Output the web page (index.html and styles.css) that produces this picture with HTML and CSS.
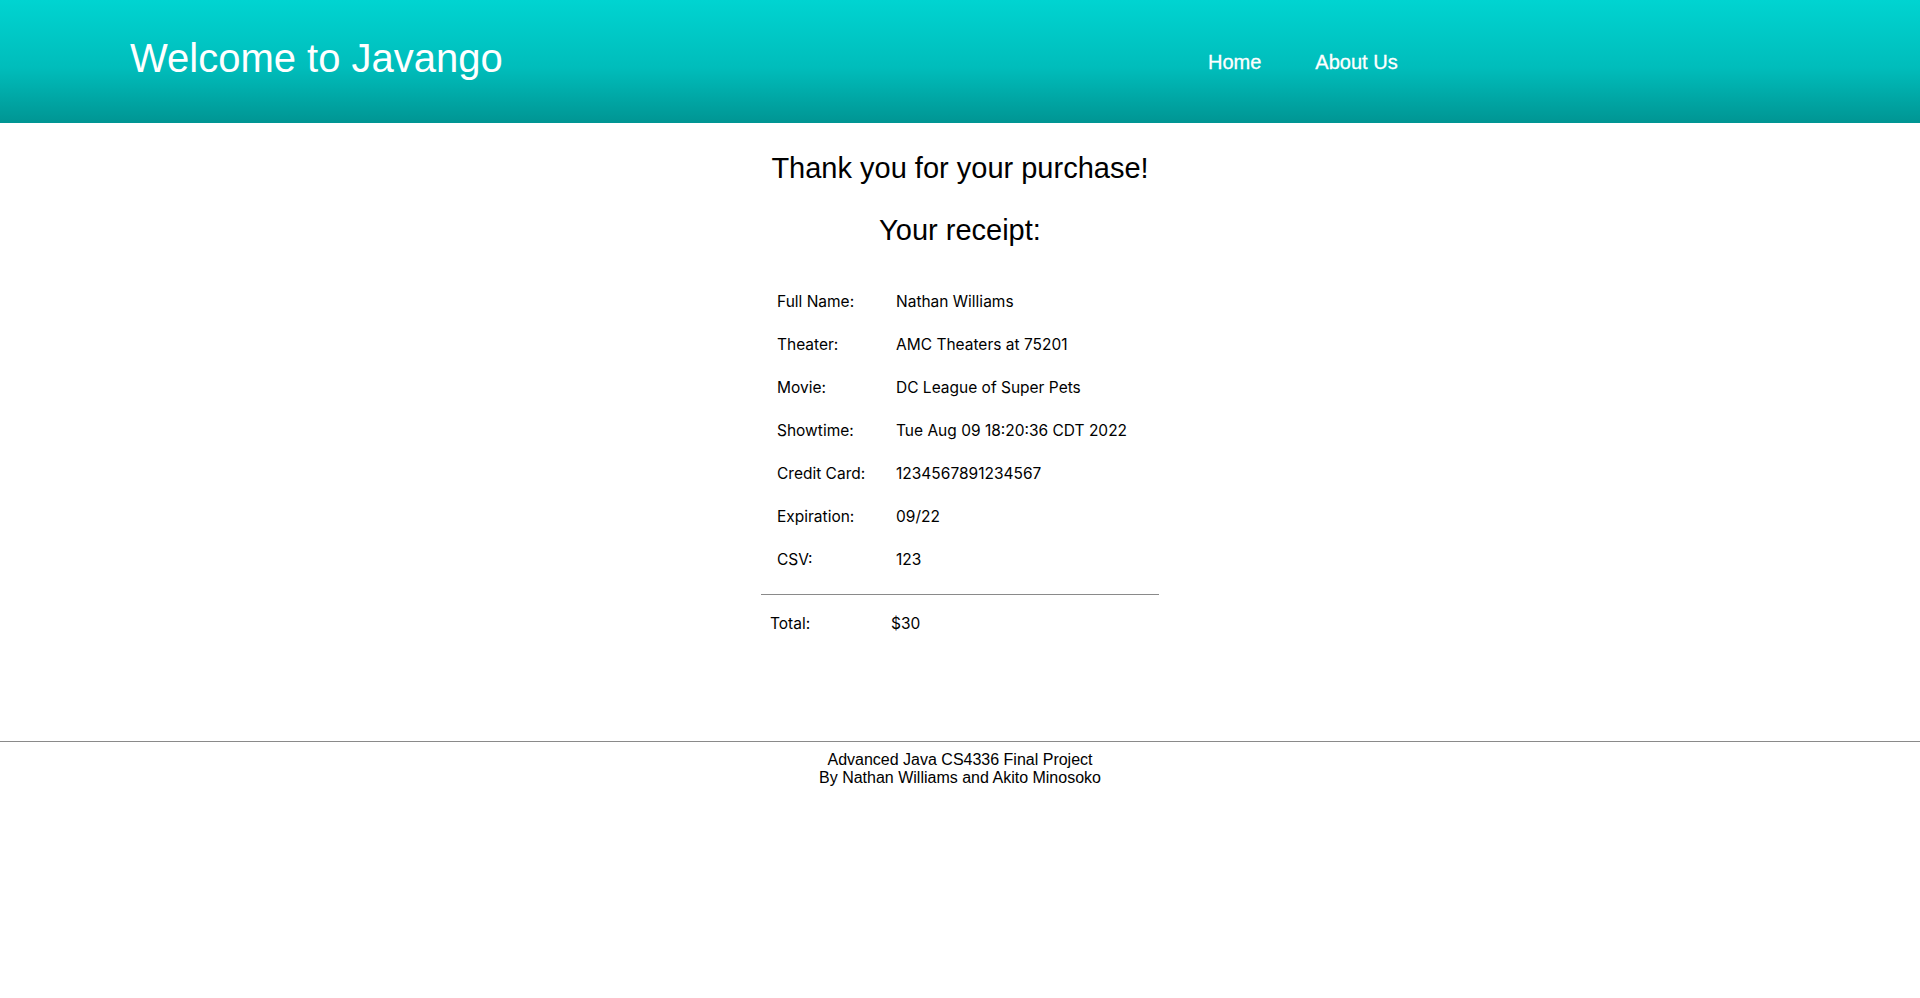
FILE: index.html
```html
<!DOCTYPE html>
<html>
<head>
<meta charset="utf-8">
<title>Javango</title>
<link rel="stylesheet" href="styles.css">
</head>
<body>
<header class="site-header">
  <h1 class="brand">Welcome to Javango</h1>
  <nav class="nav">
    <a class="nav-link" href="#">Home</a>
    <a class="nav-link" href="#">About Us</a>
  </nav>
</header>
<main class="content">
  <h2 class="heading">Thank you for your purchase!</h2>
  <h2 class="heading">Your receipt:</h2>
  <div class="receipt">
    <div class="rows">
      <div class="row"><span class="label">Full Name:</span><span class="value">Nathan Williams</span></div>
      <div class="row"><span class="label">Theater:</span><span class="value">AMC Theaters at 75201</span></div>
      <div class="row"><span class="label">Movie:</span><span class="value">DC League of Super Pets</span></div>
      <div class="row"><span class="label">Showtime:</span><span class="value">Tue Aug 09 18:20:36 CDT 2022</span></div>
      <div class="row"><span class="label">Credit Card:</span><span class="value">1234567891234567</span></div>
      <div class="row"><span class="label">Expiration:</span><span class="value">09/22</span></div>
      <div class="row"><span class="label">CSV:</span><span class="value">123</span></div>
    </div>
    <hr class="divider">
    <div class="total"><span class="label">Total:</span><span class="value">$30</span></div>
  </div>
</main>
<footer class="site-footer">
  <p class="footer-text">Advanced Java CS4336 Final Project<br>By Nathan Williams and Akito Minosoko</p>
</footer>
</body>
</html>
```
FILE: styles.css
```css
html, body {
  margin: 0;
  padding: 0;
  background: #ffffff;
  color: #000000;
  font-family: "Liberation Sans", Arial, sans-serif;
}

.site-header {
  height: 123px;
  background: linear-gradient(to bottom, #00d4d1 0%, #00bdbb 55%, #009593 100%);
  display: flex;
  align-items: center;
  padding-left: 130px;
  box-sizing: border-box;
}

.brand {
  margin: 0;
  font-size: 40px;
  font-weight: normal;
  color: #ffffff;
  line-height: 1;
  position: relative;
  top: -4px;
  width: 1078px;
}

.nav {
  display: flex;
  gap: 54px;
  padding-top: 2px;
}

.nav-link {
  color: #ffffff;
  text-decoration: none;
  font-size: 20px;
  -webkit-text-stroke: 0.3px #ffffff;
}

.content {
  display: flex;
  flex-direction: column;
  align-items: center;
  padding-top: 28px;
  min-height: 618px;
  box-sizing: border-box;
}

.heading {
  margin: 0 0 28px 0;
  font-size: 29px;
  font-weight: normal;
  line-height: 34px;
}

.receipt {
  width: 398px;
  margin-top: 5px;
  font-family: Inter, "Noto Sans", sans-serif;
  font-size: 15.5px;
}

.rows {
  display: flex;
  flex-direction: column;
}

.row {
  display: flex;
  align-items: center;
  height: 42.95px;
  padding-left: 16px;
}

.label {
  width: 119px;
  flex: none;
}

.divider {
  margin: 13px 0 0 0;
  border: none;
  border-top: 1px solid #8a8a8a;
  height: 0;
}

.total {
  display: flex;
  align-items: center;
  height: 58px;
  padding-left: 9px;
}

.total .label {
  width: 121px;
}

.site-footer {
  border-top: 1px solid #8a8a8a;
  text-align: center;
}

.footer-text {
  margin: 9px 0 0 0;
  font-size: 16px;
  line-height: 18px;
}
```
